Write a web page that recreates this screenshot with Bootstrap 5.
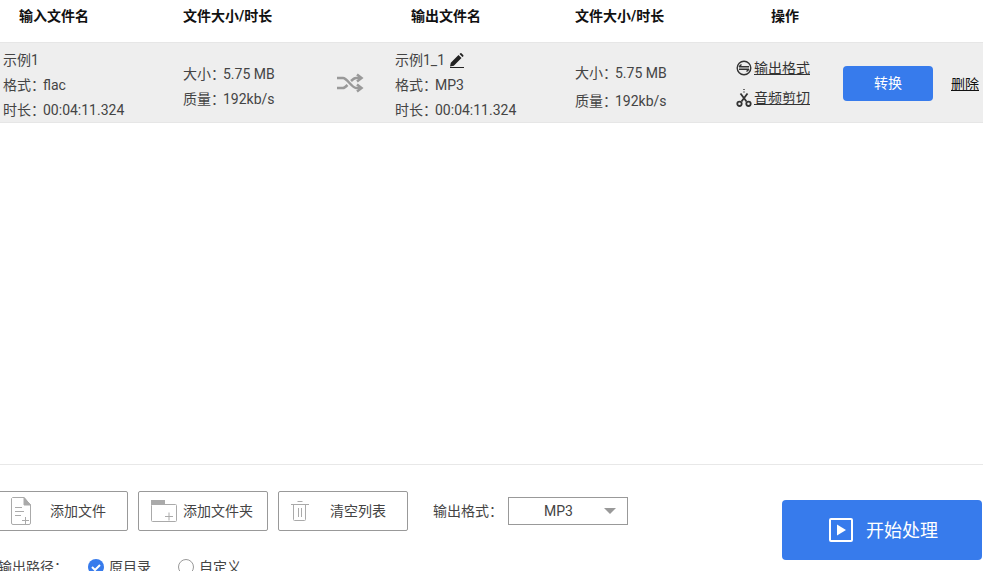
<!DOCTYPE html>
<html lang="zh">
  <head>
    <meta charset="UTF-8" />
    <title>音频转换</title>
    <link href="https://cdn.jsdelivr.net/npm/bootstrap@5.3.3/dist/css/bootstrap.min.css" rel="stylesheet" />
    <style>
      html, body {
        height: 571px;
        overflow: hidden;
      }
      body {
        font-family: Roboto, "Noto Sans CJK SC", sans-serif;
        font-size: 14px;
        color: #444;
        background: #fff;
      }
      .file-grid {
        display: grid;
        grid-template-columns: 183px 153px 59px 180px 160px 108px 108px 32px;
      }
      .head-row {
        height: 42px;
        align-items: center;
        font-weight: 700;
        color: #111;
        padding-bottom: 10px;
      }
      .file-row {
        height: 81px;
        background: #eee;
        border-top: 1px solid #e6e6e6;
        border-bottom: 1px solid #e6e6e6;
        align-items: center;
      }
      .head-first { padding-left: 19px; }
      .head-output { padding-left: 16px; }
      .head-action { padding-left: 36px; }
      .input-stack { line-height: 25px; padding-left: 3px; padding-top: 5px; }
      .output-stack { line-height: 25px; padding-top: 4px; }
      .input-size { line-height: 25px; padding-top: 8px; }
      .output-size { line-height: 28px; padding-top: 7px; }
      .name-line { gap: 5px; }
      .meta-key {
        display: inline-block;
        width: 40px;
        font-feature-settings: "palt";
      }
      .op-link {
        color: #333;
        text-decoration: underline;
        display: flex;
        align-items: center;
        gap: 2px;
        line-height: 30px;
        margin-left: 1px;
      }
      .btn-convert {
        width: 90px;
        height: 35px;
        margin-top: 1px;
        padding: 0;
        background: #377bec;
        border: 0;
        border-radius: 4px;
        color: #fff;
        font-size: 14px;
      }
      .del-cell { padding-top: 3px; }
      .del-link {
        color: #111;
        text-decoration: underline;
      }
      .blank-area { height: 341px; }
      .tool-bar {
        border-top: 1px solid #e8e8e8;
        margin-left: -2px;
        padding: 26px 1px 0 0;
      }
      .tool-btn {
        width: 130px;
        height: 40px;
        margin-right: 10px;
        padding: 0 0 0 12px;
        border: 1px solid #999;
        border-radius: 2px;
        background: #fff;
        color: #444;
        font-size: 14px;
      }
      .tool-btn .tool-label { flex: 1; text-align: center; }
      .tool-btn .label-file { padding-right: 2px; }
      .tool-btn .label-wide { padding-right: 8px; }
      .fmt-label { margin-left: 15px; }
      .fmt-select {
        width: 120px;
        height: 28px;
        border: 1px solid #999;
        margin-left: 5px;
        padding-right: 11px;
        padding-left: 4px;
      }
      .fmt-value { flex: 1; text-align: center; }
      .fmt-caret {
        width: 0;
        height: 0;
        border-left: 6px solid transparent;
        border-right: 6px solid transparent;
        border-top: 6px solid #999;
      }
      .btn-start {
        width: 200px;
        height: 60px;
        margin-top: 9px;
        padding: 0 0 0 3px;
        gap: 13px;
        background: #377bec;
        border: 0;
        border-radius: 4px;
        color: #fff;
        font-size: 18px;
      }
      .path-row {
        margin-top: 23px;
        line-height: 26px;
      }
      .path-radio {
        width: 16px;
        height: 16px;
        border-radius: 50%;
        flex: none;
        margin-right: 5px;
      }
      .radio-on { margin-left: 20px; }
      .radio-off { border: 1px solid #999; margin-left: 27px; }
    </style>
  </head>
  <body>
    <div class="file-grid head-row">
      <div class="head-first">输入文件名</div>
      <div>文件大小/时长</div>
      <div></div>
      <div class="head-output">输出文件名</div>
      <div>文件大小/时长</div>
      <div class="head-action">操作</div>
    </div>

    <div class="file-grid file-row">
      <div class="input-stack">
        <div>示例1</div>
        <div><span class="meta-key">格式：</span>flac</div>
        <div><span class="meta-key">时长：</span>00:04:11.324</div>
      </div>
      <div class="input-size">
        <div><span class="meta-key">大小：</span>5.75 MB</div>
        <div><span class="meta-key">质量：</span>192kb/s</div>
      </div>
      <div>
        <svg class="d-block" width="28" height="20" viewBox="0 0 28 20" fill="none" stroke="#999" stroke-width="2.500">
          <path d="M1 5h6c4 0 9 10 13 10h5M1 15h6c1.500 0 3-1.500 4.500-3M15 8c1.500-1.500 3-3 5-3h5" />
          <path d="M21 1.500l4.500 3.500-4.500 3.500M21 11.500l4.500 3.500-4.500 3.500" />
        </svg>
      </div>
      <div class="output-stack">
        <div class="d-flex align-items-center name-line">
          <span>示例1_1</span>
          <svg width="14" height="15" viewBox="0 0 14 15" fill="#222">
            <path d="M0.800 9.800l7.700-7.700 3 3-7.700 7.700-3.800 0.800zM9.500 1.100l0.700-0.700c0.500-0.400 1-0.400 1.400 0l1.600 1.600c0.400 0.400 0.400 1 0 1.400l-0.700 0.700z" />
            <rect x="0" y="14" width="14" height="1" />
          </svg>
        </div>
        <div><span class="meta-key">格式：</span>MP3</div>
        <div><span class="meta-key">时长：</span>00:04:11.324</div>
      </div>
      <div class="output-size">
        <div><span class="meta-key">大小：</span>5.75 MB</div>
        <div><span class="meta-key">质量：</span>192kb/s</div>
      </div>
      <div>
        <a class="op-link" href="#">
          <svg width="16" height="16" viewBox="0 0 16 16" fill="none" stroke="#333" stroke-width="1.400">
            <circle cx="8" cy="8" r="6.800" />
            <path d="M3 6.800h10M13 9.200H3M5.500 4.500L3 6.800M10.500 11.500L13 9.200" />
          </svg>
          <span>输出格式</span>
        </a>
        <a class="op-link" href="#">
          <svg width="16" height="18" viewBox="0 0 16 18" fill="none" stroke="#333" stroke-width="1.800">
            <path d="M8 0v1M8 2.500v1" stroke-width="1.400" />
            <path d="M4.500 4.500l6 8M11.500 4.500l-6 8" />
            <circle cx="3.500" cy="14.800" r="2.200" />
            <circle cx="12.500" cy="14.800" r="2.200" />
          </svg>
          <span>音频剪切</span>
        </a>
      </div>
      <div class="d-flex">
        <button class="btn btn-convert">转换</button>
      </div>
      <div class="del-cell"><a class="del-link" href="#">删除</a></div>
    </div>

    <div class="blank-area"></div>

    <div class="tool-bar d-flex justify-content-between align-items-start">
      <div>
        <div class="d-flex align-items-center">
          <button class="btn tool-btn d-flex align-items-center">
            <svg width="20" height="28" viewBox="0 0 20 28" fill="none" stroke="#aaa">
              <path d="M1.500 0.500h11.500l6.500 7.500v18a1.500 1.500 0 0 1-1.500 1.500H2a1.500 1.500 0 0 1-1.500-1.500V1.500z" />
              <path d="M13 0.500l6.500 7.500H13z" fill="#aaa" />
              <path d="M4 10.500h7M4 14.500h9M4 18.500h6M11 23.500h7M14.500 20v7" />
            </svg>
            <span class="tool-label label-file">添加文件</span>
          </button>
          <button class="btn tool-btn d-flex align-items-center">
            <svg width="26" height="22" viewBox="0 0 26 22" fill="none" stroke="#aaa">
              <rect x="0.500" y="4.500" width="25" height="17" rx="1" />
              <rect x="0" y="0" width="14" height="5" fill="#aaa" stroke="none" />
              <path d="M14 16.500h8M18 12.500v8" />
            </svg>
            <span class="tool-label label-wide">添加文件夹</span>
          </button>
          <button class="btn tool-btn d-flex align-items-center">
            <svg width="18" height="20" viewBox="0 0 18 20" fill="none" stroke="#aaa">
              <path d="M0 3.500h18M6.500 0.500h5M2.500 3.500v15a1 1 0 0 0 1 1h10a1 1 0 0 0 1-1v-15M7.500 7v9M10.500 7v9" />
            </svg>
            <span class="tool-label">清空列表</span>
          </button>
          <span class="fmt-label">输出格式：</span>
          <div class="fmt-select d-flex align-items-center">
            <span class="fmt-value">MP3</span>
            <span class="fmt-caret"></span>
          </div>
        </div>
        <div class="path-row d-flex align-items-center">
          <span>输出路径：</span>
          <span class="path-radio radio-on d-flex">
            <svg width="16" height="16" viewBox="0 0 16 16">
              <circle cx="8" cy="8" r="8" fill="#377bec" />
              <path d="M4 8l3 3 5-5" fill="none" stroke="#fff" stroke-width="2" />
            </svg>
          </span>
          <span>原目录</span>
          <span class="path-radio radio-off"></span>
          <span>自定义</span>
        </div>
      </div>
      <button class="btn btn-start d-flex align-items-center justify-content-center">
        <svg width="24" height="24" viewBox="0 0 24 24" fill="none">
          <rect x="1" y="1" width="22" height="22" rx="1" stroke="#fff" stroke-width="2" />
          <path d="M8 6.500l9 5.500-9 5.500z" fill="#fff" />
        </svg>
        <span>开始处理</span>
      </button>
    </div>

    <script src="https://cdn.jsdelivr.net/npm/bootstrap@5.3.3/dist/js/bootstrap.bundle.min.js"></script>
  </body>
</html>
